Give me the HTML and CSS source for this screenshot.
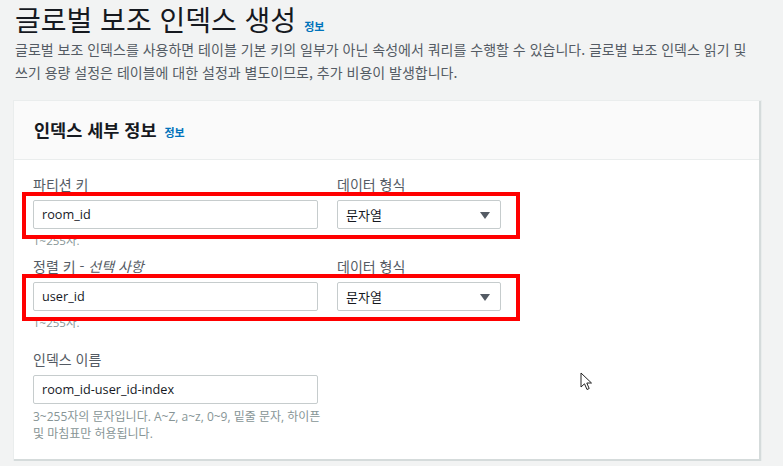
FILE: index.html
```html
<!DOCTYPE html>
<html lang="ko">
<head>
<meta charset="utf-8">
<link rel="stylesheet" href="styles.css">
</head>
<body>
<div class="page">
  <div class="title-row">
    <h1 class="title">글로벌 보조 인덱스 생성</h1>
    <a class="info">정보</a>
  </div>
  <p class="desc">글로벌 보조 인덱스를 사용하면 테이블 기본 키의 일부가 아닌 속성에서 쿼리를 수행할 수 있습니다. 글로벌 보조 인덱스 읽기 및<br>쓰기 용량 설정은 테이블에 대한 설정과 별도이므로, 추가 비용이 발생합니다.</p>

  <section class="card">
    <div class="card-header">
      <h2 class="card-title">인덱스 세부 정보</h2>
      <a class="info">정보</a>
    </div>
    <div class="card-body">
      <div class="key-group">
        <div class="labels">
          <label class="label col-key">파티션 키</label>
          <label class="label col-type">데이터 형식</label>
        </div>
        <div class="controls marked">
          <div class="input col-key">room_id</div>
          <div class="select col-type"><span>문자열</span><svg class="caret" width="10" height="7" viewBox="0 0 10 7"><path d="M0 0 H10 L5 7 Z" fill="#545b64"/></svg></div>
        </div>
        <div class="help">1~255자.</div>
      </div>

      <div class="key-group">
        <div class="labels">
          <label class="label col-key">정렬 키 - <em>선택 사항</em></label>
          <label class="label col-type">데이터 형식</label>
        </div>
        <div class="controls marked">
          <div class="input col-key">user_id</div>
          <div class="select col-type"><span>문자열</span><svg class="caret" width="10" height="7" viewBox="0 0 10 7"><path d="M0 0 H10 L5 7 Z" fill="#545b64"/></svg></div>
        </div>
        <div class="help">1~255자.</div>
      </div>

      <div class="name-group">
        <label class="label">인덱스 이름</label>
        <div class="controls">
          <div class="input col-key">room_id-user_id-index</div>
        </div>
        <div class="help help-multi">3~255자의 문자입니다. A~Z, a~z, 0~9, 밑줄 문자, 하이픈<br>및 마침표만 허용됩니다.</div>
      </div>

      <svg class="cursor" width="13" height="20" viewBox="0 0 13 20">
        <path d="M1 1 L1 15 L4.5 11.8 L7 17.5 L9.2 16.5 L6.8 11 L11.5 11 Z" fill="#fff" stroke="#222" stroke-width="1" stroke-linejoin="round"/>
      </svg>
    </div>
  </section>
</div>
</body>
</html>
```

FILE: styles.css
```css
*, *::before, *::after { box-sizing: border-box; }

html, body {
  margin: 0;
  padding: 0;
  background: #f2f3f3;
}

body {
  font-family: "Open Sans", "Noto Sans CJK KR", sans-serif;
  color: #16191f;
}

.page {
  padding: 0 22px 0 14px;
}

.title-row {
  display: flex;
  align-items: baseline;
  gap: 8px;
  padding-left: 1px;
  padding-top: 1px;
}

.title {
  margin: 0;
  font-family: "Noto Sans CJK KR", sans-serif;
  font-size: 28px;
  font-weight: 400;
  line-height: 37px;
  color: #16191f;
}

.info {
  font-family: "Noto Sans CJK KR", sans-serif;
  font-size: 11px;
  font-weight: 700;
  color: #0073bb;
}

.desc {
  margin: 0 0 0 1px;
  font-family: "Noto Sans CJK KR", sans-serif;
  font-size: 14px;
  line-height: 23px;
  color: #545b64;
}

.card {
  margin-top: 17px;
  background: #fff;
  border-right: 2px solid #d5dbdb;
  border-bottom: 2px solid #d5dbdb;
  box-shadow: 0 0 0 1px #eaeded;
}

.card-header {
  display: flex;
  align-items: baseline;
  gap: 8px;
  height: 59px;
  padding: 17px 20px 0;
  background: #fafafa;
  border-bottom: 1px solid #eaeded;
}

.card-title {
  margin: 0;
  font-family: "Noto Sans CJK KR", sans-serif;
  font-size: 17.5px;
  font-weight: 700;
  line-height: 24px;
  color: #16191f;
}

.card-body {
  position: relative;
  padding: 14px 19px 17px;
}

.labels, .controls {
  display: flex;
  gap: 19px;
}

.label {
  display: block;
  font-family: "Noto Sans CJK KR", sans-serif;
  font-size: 14px;
  line-height: 20px;
  color: #545b64;
}

.label em {
  font-style: italic;
}

.col-key { width: 285px; }
.col-type { width: 164px; }

.controls {
  margin-top: 6px;
  position: relative;
}

.controls.marked::after {
  content: "";
  position: absolute;
  left: -11px;
  top: -8px;
  width: 498px;
  height: 47px;
  border: 4px solid #ff0000;
  pointer-events: none;
}

.input, .select {
  height: 29px;
  border: 1px solid #c6cccd;
  border-radius: 2px;
  background: #fff;
  font-size: 12.7px;
  line-height: 27px;
  color: #16191f;
  padding: 0 8px;
}

.select {
  display: flex;
  align-items: center;
  justify-content: space-between;
  font-family: "Noto Sans CJK KR", sans-serif;
  font-size: 13px;
  padding-right: 10px;
}

.caret {
  display: block;
  margin-top: 1px;
}

.help {
  margin-top: 4px;
  font-family: "Open Sans", "Noto Sans CJK KR", sans-serif;
  font-size: 11.5px;
  line-height: 16px;
  color: #879596;
}

.key-group + .key-group {
  margin-top: 7px;
}

.name-group {
  margin-top: 18px;
}

.help-multi {
  margin-top: 4px;
  font-size: 12px;
  line-height: 17px;
}

.cursor {
  position: absolute;
  left: 566px;
  top: 212px;
}
```
